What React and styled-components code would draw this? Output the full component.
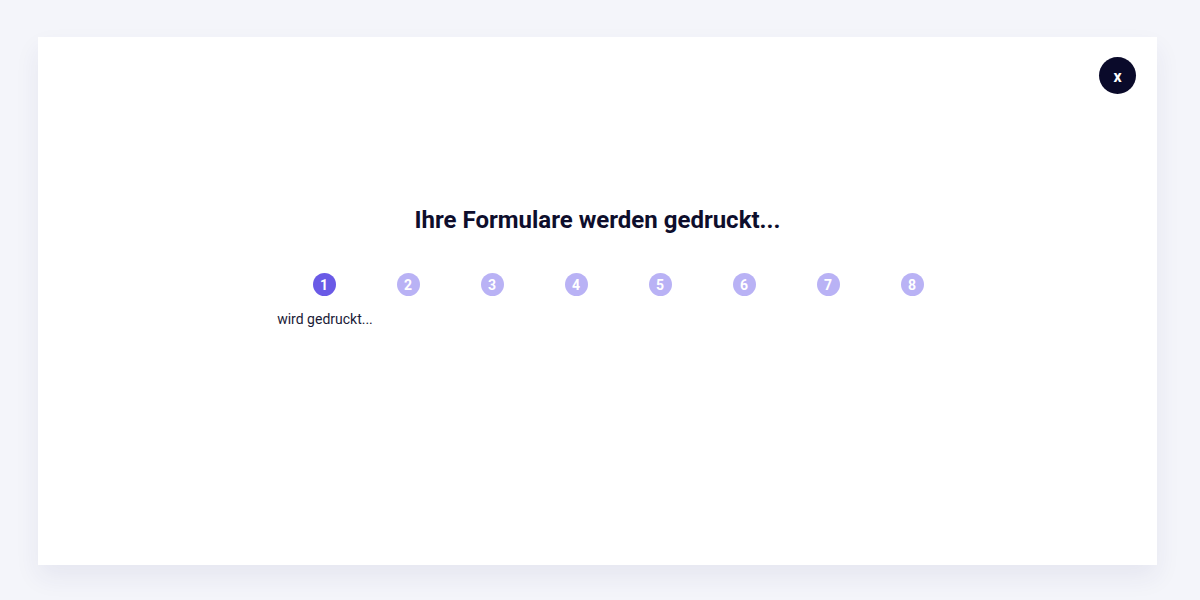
import React from 'react';
import styled, { createGlobalStyle } from 'styled-components';

const GlobalStyle = createGlobalStyle`
  body {
    margin: 0;
    background: #f4f5fa;
    font-family: Roboto, 'Liberation Sans', sans-serif;
  }
`

const Page = styled.div`
  width: 1200px;
  height: 600px;
  padding: 37px 43px 35px 38px;
  box-sizing: border-box;
`

const Card = styled.div`
  position: relative;
  height: 528px;
  background: #fff;
  box-shadow: 0 12px 24px rgba(40, 40, 110, 0.07);
  display: flex;
  flex-direction: column;
  align-items: center;
  padding-top: 166px;
  box-sizing: border-box;
`

const Close = styled.button`
  position: absolute;
  top: 20px;
  right: 21px;
  width: 37px;
  height: 37px;
  border-radius: 50%;
  border: none;
  background: #0a0a2a;
  color: #fff;
  font-family: inherit;
  font-weight: 700;
  font-size: 16px;
  display: flex;
  align-items: center;
  justify-content: center;
  padding: 1px 0 0 0;
`

const Title = styled.h2`
  margin: 0;
  font-size: 24px;
  font-weight: 700;
  color: #0e0e2c;
  line-height: 34px;
`

const Steps = styled.div`
  display: flex;
  justify-content: center;
  margin-top: 36px;
  padding-left: 41px;
`

const Step = styled.div`
  width: 84px;
  display: flex;
  flex-direction: column;
  align-items: center;
`

const Dot = styled.div`
  width: 23px;
  height: 23px;
  border-radius: 50%;
  background: ${p => (p.$active ? '#6a5ae6' : '#b9b2f5')};
  color: #fff;
  font-size: 14px;
  font-weight: 700;
  display: flex;
  align-items: center;
  justify-content: center;
`

const Label = styled.div`
  margin-top: 15px;
  white-space: nowrap;
  font-size: 14px;
  color: #1a1a36;
  padding-left: 2px;
`

const App = () => {
  const steps = [1, 2, 3, 4, 5, 6, 7, 8];
  return (
    <Page>
      <GlobalStyle />
      <Card>
        <Close>x</Close>
        <Title>Ihre Formulare werden gedruckt...</Title>
        <Steps>
          {steps.map(n => (
            <Step key={n}>
              <Dot $active={n === 1}>{n}</Dot>
              {n === 1 && <Label>wird gedruckt...</Label>}
            </Step>
          ))}
        </Steps>
      </Card>
    </Page>
  );
};

export default App;
